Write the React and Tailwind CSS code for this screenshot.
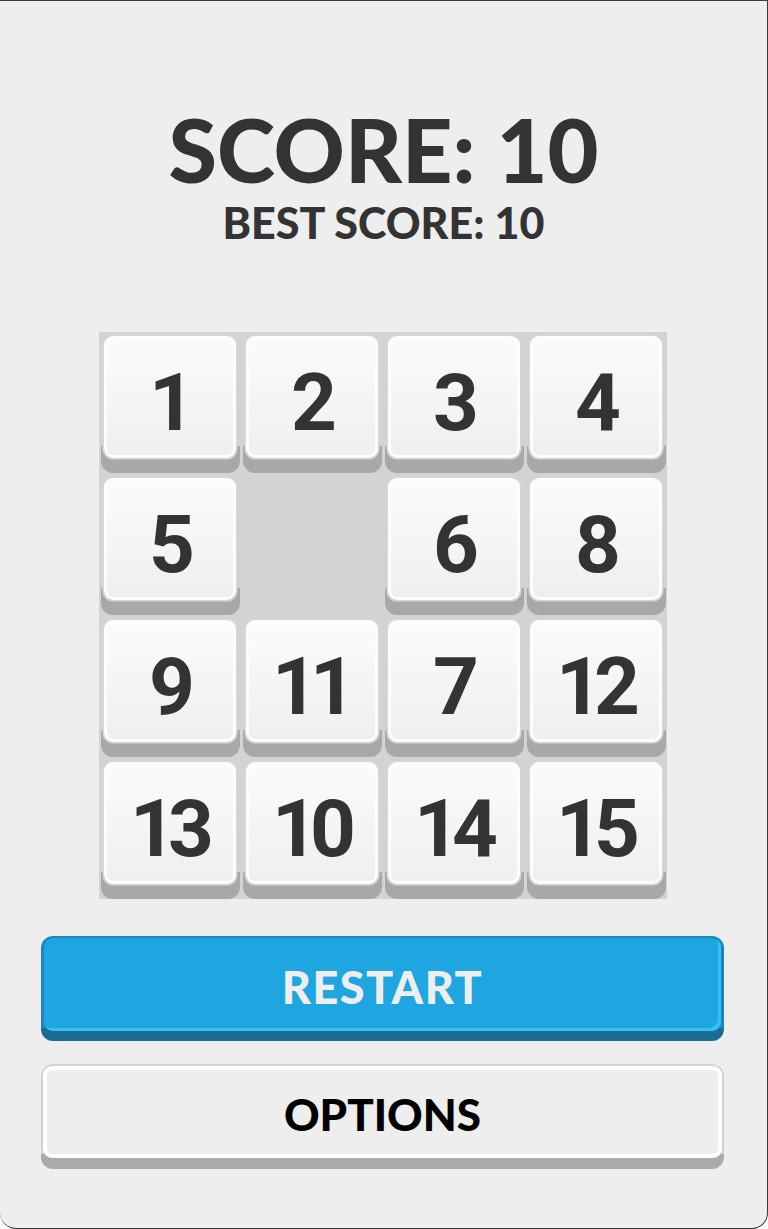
import React from "react";

const tiles = [1, 2, 3, 4, 5, null, 6, 8, 9, 11, 7, 12, 13, 10, 14, 15];

const Tile = ({ value }) => {
  if (value === null) return <div className="h-[142px]" />;
  return (
    <div className="h-[142px] flex justify-center pt-[4px]">
      <div className="w-[139px] h-[137px] rounded-[12px] flex flex-col items-center bg-[linear-gradient(to_bottom,transparent_80%,#a8a8a8_80%)]">
        <div className="w-[132px] h-[122px] rounded-[9px] border-[3px] border-[#fdfdfd] bg-[linear-gradient(to_bottom,#fbfbfb,#efefef)] shadow-[0_0_0_1.5px_#d6d6d6] flex items-center justify-center pt-[12px] pr-[4px]">
          <span className="font-['Roboto',sans-serif] font-bold text-[80px] leading-none tracking-[-0.1em] text-[#333333]">
            {value}
          </span>
        </div>
      </div>
    </div>
  );
};

export default function App() {
  return (
    <div className="w-[768px] h-[1229px] bg-[#eeeeee] border-t border-r border-b border-[#3a3a3a] rounded-b-[16px] overflow-hidden font-['Lato',sans-serif]">
      <div className="pt-[104px] flex flex-col items-center text-[#333333]">
        <h1 className="text-[88px] leading-none font-black">SCORE: 10</h1>
        <h2 className="mt-[8px] text-[43px] leading-none font-black">BEST SCORE: 10</h2>
      </div>

      <div className="mt-[88px] ml-[99px] w-[568px] h-[567px] overflow-hidden bg-[#d3d3d3] grid grid-cols-4">
        {tiles.map((t, i) => (
          <Tile key={i} value={t} />
        ))}
      </div>

      <div className="ml-[41px] w-[683px] mt-[37px] flex flex-col gap-[23px]">
        <button className="h-[105px] rounded-[12px] px-[3px] pt-[2px] pb-[10px] bg-[linear-gradient(to_bottom,#1c87bb_88%,#1a6c94_88%)]">
          <div className="h-full rounded-[9px] bg-[#1fa5e0] shadow-[inset_-3px_-3px_0_#3abcf5] flex items-center justify-center pt-[6px]">
            <span className="text-[45px] leading-none font-black tracking-[1.5px] text-[#eeeeee]">
              RESTART
            </span>
          </div>
        </button>

        <button className="h-[105px] rounded-[12px] px-[2px] pt-[2px] pb-[11px] bg-[linear-gradient(to_bottom,#d2d2d2_86%,#aaaaaa_86%)]">
          <div className="h-full rounded-[9px] border-[4px] border-white bg-[#eeeeee] flex items-center justify-center pt-[4px]">
            <span className="text-[44px] leading-none font-black tracking-[0px] text-black">
              OPTIONS
            </span>
          </div>
        </button>
      </div>
    </div>
  );
}
